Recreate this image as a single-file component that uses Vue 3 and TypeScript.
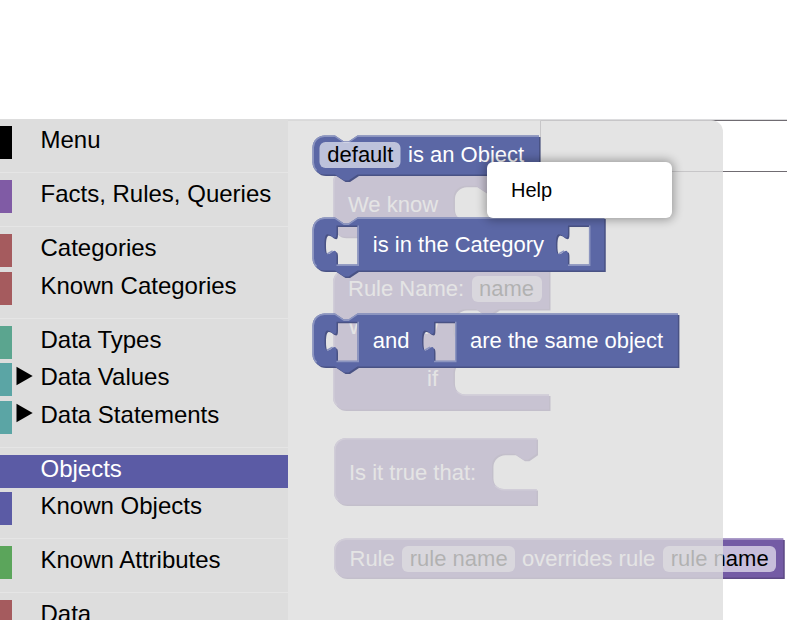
<script setup lang="ts">
interface Category {
  name: string
  color: string
  arrow?: boolean
  selected?: boolean
}

interface Hole {
  x: number
  y: number
  w: number
  h: number
}

interface Slot {
  x: number
  top: number
  bottom: number
}

interface Label {
  x: number
  y: number
  text: string
  field?: { x: number; w: number }
}

interface Block {
  x: number
  y: number
  w: number
  h: number
  stack: boolean
  holes: Hole[]
  slots: Slot[]
  labels: Label[]
}

const groups: Category[][] = [
  [{ name: 'Menu', color: '#000000' }],
  [{ name: 'Facts, Rules, Queries', color: '#805ba5' }],
  [
    { name: 'Categories', color: '#a55b5e' },
    { name: 'Known Categories', color: '#a55b5e' },
  ],
  [
    { name: 'Data Types', color: '#5ba58f' },
    { name: 'Data Values', color: '#5ba5a5', arrow: true },
    { name: 'Data Statements', color: '#5ba5a5', arrow: true },
  ],
  [
    { name: 'Objects', color: '#5b5ba5', selected: true },
    { name: 'Known Objects', color: '#5b5ba5' },
  ],
  [{ name: 'Known Attributes', color: '#5ba55b' }],
  [{ name: 'Data', color: '#a55b5e' }],
]

const workspaceBlocks: Block[] = [
  {
    x: 333, y: 170, w: 136, h: 44.5, stack: false, holes: [],
    slots: [{ x: 80.3, top: 10.5, bottom: 33.5 }],
    labels: [{ x: 348, y: 212, text: 'We know' }],
  },
  {
    x: 333, y: 270, w: 144, h: 93, stack: false, holes: [],
    slots: [
      { x: 80.3, top: 26, bottom: 49 },
      { x: 80.3, top: 60, bottom: 83 },
    ],
    labels: [
      { x: 348, y: 296, text: 'Rule Name:' },
      { x: 479, y: 296, text: 'name', field: { x: 472, w: 70 } },
      { x: 348, y: 334, text: 'We know' },
      { x: 427, y: 386, text: 'if' },
    ],
  },
  {
    x: 334, y: 438, w: 135, h: 44.3, stack: false, holes: [],
    slots: [{ x: 105.3, top: 10.5, bottom: 34 }],
    labels: [{ x: 349, y: 480, text: 'Is it true that:' }],
  },
  {
    x: 334, y: 538.5, w: 299.5, h: 26, stack: false, holes: [], slots: [],
    labels: [
      { x: 349.5, y: 566, text: 'Rule' },
      { x: 409.8, y: 566, text: 'rule name', field: { x: 402, w: 113 } },
      { x: 522, y: 566, text: 'overrides rule' },
      { x: 670.8, y: 566, text: 'rule name', field: { x: 663, w: 113 } },
    ],
  },
]

const flyoutBlocks: Block[] = [
  {
    x: 312.5, y: 135.5, w: 151, h: 26, stack: true, holes: [], slots: [],
    labels: [
      { x: 327.3, y: 162, text: 'default', field: { x: 319.5, w: 81 } },
      { x: 408, y: 162, text: 'is an Object' },
    ],
  },
  {
    x: 312.5, y: 217.5, w: 194.5, h: 35.3, stack: true, slots: [],
    holes: [
      { x: 16, y: 5.3, w: 14, h: 26 },
      { x: 170.3, y: 5.3, w: 14, h: 26 },
    ],
    labels: [{ x: 372.8, y: 252, text: 'is in the Category' }],
  },
  {
    x: 312.5, y: 313.5, w: 243.6, h: 35.3, stack: true, slots: [],
    holes: [
      { x: 16, y: 5.5, w: 14, h: 26 },
      { x: 81, y: 5.5, w: 14, h: 26 },
    ],
    labels: [
      { x: 372.8, y: 348, text: 'and' },
      { x: 470, y: 348, text: 'are the same object' },
    ],
  },
]

function outline(b: Block): string {
  let d = 'M 0,8 A 8,8 0 0,1 8,0 '
  if (b.stack) d += 'h 7 l 6,4 3,0 6,-4 '
  d += `H ${b.w} `
  for (const s of b.slots) {
    d += `V ${s.top} `
    d += `H ${Math.min(s.x + 30, b.w)} L ${s.x + 24},${s.top + 4} h -3 l -6,-4 h -7 `
    d += `a 8,8 0 0,0 -8,8 V ${s.bottom - 8} a 8,8 0 0,0 8,8 H ${b.w} `
  }
  d += `V ${b.h} `
  if (b.stack) d += 'H 30 l -6,4 -3,0 -6,-4 '
  d += 'H 8 a 8,8 0 0,1 -8,-8 Z '
  for (const o of b.holes) {
    d += `M ${o.x},${o.y} v 5 c 0,10 -8,-8 -8,7.5 s 8,-2.5 8,7.5 V ${o.y + o.h} h ${o.w} v ${-o.h} Z `
  }
  return d
}

function highlight(b: Block): string {
  let d = `M 2.7,${b.h - 2.7} A 7.5,7.5 0 0,1 0.5,${b.h - 8} V 8 A 7.5,7.5 0 0,1 8,0.5 `
  if (b.stack) d += 'H 15 l 6,4 3,0 6,-4 '
  d += `H ${b.w} `
  for (const s of b.slots) {
    d += `M ${s.x + 2.2},${s.bottom - 2.2} A 8.5,8.5 0 0,0 ${s.x + 8},${s.bottom + 0.5} H ${b.w} `
  }
  for (const o of b.holes) {
    d += `M ${o.x + o.w + 0.5},${o.y} V ${o.y + o.h + 0.5} H ${o.x} `
    d += `M ${o.x - 6.2},${o.y + 19} l 3.6,-2.1 `
  }
  return d
}
</script>

<template>
  <div class="editor">
    <nav class="toolbox">
      <div v-for="(group, i) in groups" :key="i" class="group">
        <div
          v-for="item in group"
          :key="item.name"
          class="row"
          :class="{ selected: item.selected }"
          :style="{ borderLeftColor: item.color, backgroundColor: item.selected ? item.color : undefined }"
        >
          <span class="icon">
            <svg v-if="item.arrow" class="arrow" viewBox="0 0 17 20">
              <path d="M0.5 0.8 L16.7 10 L0.5 19.2 Z" />
            </svg>
          </span>
          <span class="name">{{ item.name }}</span>
        </div>
      </div>
    </nav>

    <svg class="canvas" viewBox="288 119 499 501">
      <path class="edge" d="M288 119.5 H787" />
      <path class="frame" d="M288 120.5 H787" />
      <path class="outline" d="M800 120.5 H540.5 V171.5 H800" />
      <g class="workspace">
        <g v-for="(b, i) in workspaceBlocks" :key="i">
          <g :transform="`translate(${b.x} ${b.y}) scale(1.5)`">
            <path class="dark" :d="outline(b)" transform="translate(1 1)" />
            <path class="body" :d="outline(b)" />
            <path class="light" :d="highlight(b)" />
          </g>
          <g v-for="l in b.labels" :key="`${l.x}-${l.y}`">
            <rect v-if="l.field" class="field" :x="l.field.x" :y="l.y - 20" :width="l.field.w" height="26" rx="6" />
            <text :class="{ value: l.field }" :x="l.x" :y="l.y">{{ l.text }}</text>
          </g>
        </g>
      </g>

      <path class="flyout" d="M288 120 H711 A12 12 0 0 1 723 132 V620 H288 Z" />
      <g class="drawer">
        <g v-for="(b, i) in flyoutBlocks" :key="i">
          <g :transform="`translate(${b.x} ${b.y}) scale(1.5)`">
            <path class="dark" :d="outline(b)" transform="translate(1 1)" />
            <path class="body" :d="outline(b)" />
            <path class="light" :d="highlight(b)" />
          </g>
          <g v-for="l in b.labels" :key="`${l.x}-${l.y}`">
            <rect v-if="l.field" class="field" :x="l.field.x" :y="l.y - 20" :width="l.field.w" height="26" rx="6" />
            <text :class="{ value: l.field }" :x="l.x" :y="l.y">{{ l.text }}</text>
          </g>
        </g>
      </g>
    </svg>

    <div class="menu">
      <div class="menu-item">Help</div>
    </div>
  </div>
</template>

<style>
html,
body {
  overflow: hidden;
  background: #fff;
}
</style>

<style scoped>
.editor {
  position: relative;
  display: flex;
  box-sizing: border-box;
  height: 620px;
  padding-top: 119px;
  overflow: hidden;
  font-family: 'Liberation Sans', Arial, sans-serif;
}

.toolbox {
  flex: none;
  box-sizing: border-box;
  width: 288px;
  height: 501px;
  padding-top: 7px;
  overflow: hidden;
  background: #ddd;
}

.group + .group {
  margin-top: 13px;
  padding-top: 7px;
  border-top: 1px solid #e5e5e5;
}

.row {
  display: flex;
  box-sizing: border-box;
  height: 33px;
  margin-bottom: 4.5px;
  border-left: 12px solid transparent;
  color: #000;
  font-size: 24px;
  line-height: 28px;
  white-space: nowrap;
}

.row.selected {
  color: #fff;
}

.icon {
  flex: none;
  width: 28.5px;
}

.arrow {
  display: block;
  width: 17px;
  height: 20px;
  margin: 2.5px 0 0 4px;
}

.canvas {
  display: block;
  flex: none;
  width: 499px;
  height: 501px;
  background: #fff;
}

.canvas text {
  fill: #fff;
  font-size: 22px;
}

.canvas text.value {
  fill: #000;
}

.field {
  fill: #fff;
  fill-opacity: 0.6;
}

.edge {
  fill: none;
  stroke: #dcdcde;
}

.frame {
  fill: none;
  stroke: #c6c6c6;
}

.outline {
  fill: #fff;
  stroke: #706c72;
}

.body,
.dark {
  fill-rule: evenodd;
}

.light {
  fill: none;
  stroke-width: 1;
}

.workspace .body {
  fill: #745ba5;
}

.workspace .dark {
  fill: #5d4984;
}

.workspace .light {
  stroke: #9e8cc0;
}

.flyout {
  fill: #ddd;
  fill-opacity: 0.8;
}

.drawer .body {
  fill: #5b67a5;
}

.drawer .dark {
  fill: #495284;
}

.drawer .light {
  stroke: #8c95c0;
}

.menu {
  position: absolute;
  top: 162px;
  left: 487px;
  display: flex;
  align-items: center;
  box-sizing: border-box;
  width: 185px;
  height: 56px;
  padding-left: 24px;
  border-radius: 6px;
  background: #fff;
  box-shadow: 0 0 10px 2px rgba(0, 0, 0, 0.32);
}

.menu-item {
  color: #000;
  font-size: 20px;
  line-height: 24px;
}
</style>
